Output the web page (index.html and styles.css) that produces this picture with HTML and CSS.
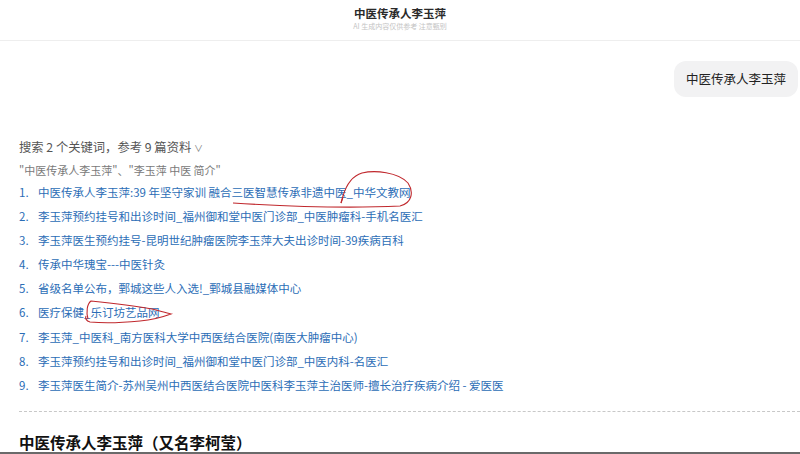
FILE: index.html
```html
<!DOCTYPE html>
<html lang="zh">
<head>
<meta charset="utf-8">
<link rel="stylesheet" href="styles.css">
</head>
<body>
<header class="top">
  <div class="title">中医传承人李玉萍</div>
  <div class="sub">AI 生成内容仅供参考 注意甄别</div>
</header>
<main class="page">
  <div class="user-row"><div class="bubble">中医传承人李玉萍</div></div>
  <div class="search">搜索 2 个关键词，参考 9 篇资料 <span class="chev">∨</span></div>
  <div class="quotes">"中医传承人李玉萍"、"李玉萍 中医 简介"</div>
  <ol class="refs">
    <li><span class="n">1.</span><span>中医传承人李玉萍:39 年坚守家训 融合三医智慧传承非遗中医_中华文教网</span></li>
    <li><span class="n">2.</span><span>李玉萍预约挂号和出诊时间_福州御和堂中医门诊部_中医肿瘤科-手机名医汇</span></li>
    <li><span class="n">3.</span><span>李玉萍医生预约挂号-昆明世纪肿瘤医院李玉萍大夫出诊时间-39疾病百科</span></li>
    <li><span class="n">4.</span><span>传承中华瑰宝---中医针灸</span></li>
    <li><span class="n">5.</span><span>省级名单公布，鄄城这些人入选!_鄄城县融媒体中心</span></li>
    <li><span class="n">6.</span><span>医疗保健_乐订坊艺品网</span></li>
    <li><span class="n">7.</span><span>李玉萍_中医科_南方医科大学中西医结合医院(南医大肿瘤中心)</span></li>
    <li><span class="n">8.</span><span>李玉萍预约挂号和出诊时间_福州御和堂中医门诊部_中医内科-名医汇</span></li>
    <li><span class="n">9.</span><span>李玉萍医生简介-苏州吴州中西医结合医院中医科李玉萍主治医师-擅长治疗疾病介绍 - 爱医医</span></li>
  </ol>
  <div class="dash"></div>
  <h2 class="heading">中医传承人李玉萍（又名李柯莹）</h2>
</main>
<div class="bottom-bar"></div>
<svg class="marks" width="800" height="454" viewBox="0 0 800 454">
  <path d="M233 203 C280 206 340 209 400 206 C412 203 414 192 408 183 C398 172 375 170 362 173 C352 176 346 186 343 196 L341 203" fill="none" stroke="#c0282d" stroke-width="1.1"/>
  <path d="M341 203 L343 197" fill="none" stroke="#c0282d" stroke-width="1.1"/>
  <path d="M88 319 C86 312 87 304 91 301 C110 303 135 306 152 309 C160 311 166 313 171 314 C160 318 150 320 140 321 C120 323 100 323 90 322 C86 321 85 318 86 316" fill="none" stroke="#c0282d" stroke-width="1.1"/>
</svg>
</body>
</html>
```

FILE: styles.css
```css
* { box-sizing: border-box; }
html, body { margin: 0; padding: 0; }
body {
  width: 800px;
  height: 454px;
  overflow: hidden;
  background: #fff;
  font-family: "Noto Sans CJK SC", "Noto Sans", sans-serif;
  position: relative;
}
.top {
  height: 41px;
  border-bottom: 1px solid #eeeeee;
  display: flex;
  flex-direction: column;
  align-items: center;
  padding-top: 4px;
}
.title {
  font-size: 11.5px;
  line-height: 18px;
  font-weight: 600;
  color: #2a2a2a;
}
.sub {
  font-size: 7px;
  line-height: 9px;
  color: #c4c4c4;
}
.page { padding: 0 0 0 19px; }
.user-row {
  display: flex;
  justify-content: flex-end;
  padding-right: 2px;
  margin-top: 20px;
}
.bubble {
  height: 36px;
  line-height: 36px;
  padding: 0 12px;
  background: #f2f2f3;
  border-radius: 12px;
  font-size: 12.5px;
  color: #222;
}
.search {
  margin-top: 41px;
  font-size: 12.3px;
  line-height: 18px;
  color: #555;
}
.chev { font-size: 9px; color: #777; }
.quotes {
  margin-top: 3px;
  font-size: 11px;
  line-height: 18px;
  color: #7a7a7a;
}
.refs {
  list-style: none;
  margin: 1px 0 0 0;
  padding: 0;
}
.refs li {
  display: flex;
  height: 24.1px;
  line-height: 24px;
  font-size: 11.5px;
  color: #2b6db6;
  white-space: nowrap;
}
.refs .n { width: 19px; }
.dash {
  margin-top: 14px;
  border-top: 1px dashed #c8c8c8;
  height: 0;
}
.heading {
  margin: 19px 0 0 0;
  font-size: 15.5px;
  line-height: 22px;
  font-weight: 700;
  color: #111;
}
.bottom-bar {
  position: absolute;
  left: 0;
  bottom: 0;
  width: 800px;
  height: 2px;
  background: #6a6a6a;
}
.marks {
  position: absolute;
  left: 0;
  top: 0;
  pointer-events: none;
}
```
